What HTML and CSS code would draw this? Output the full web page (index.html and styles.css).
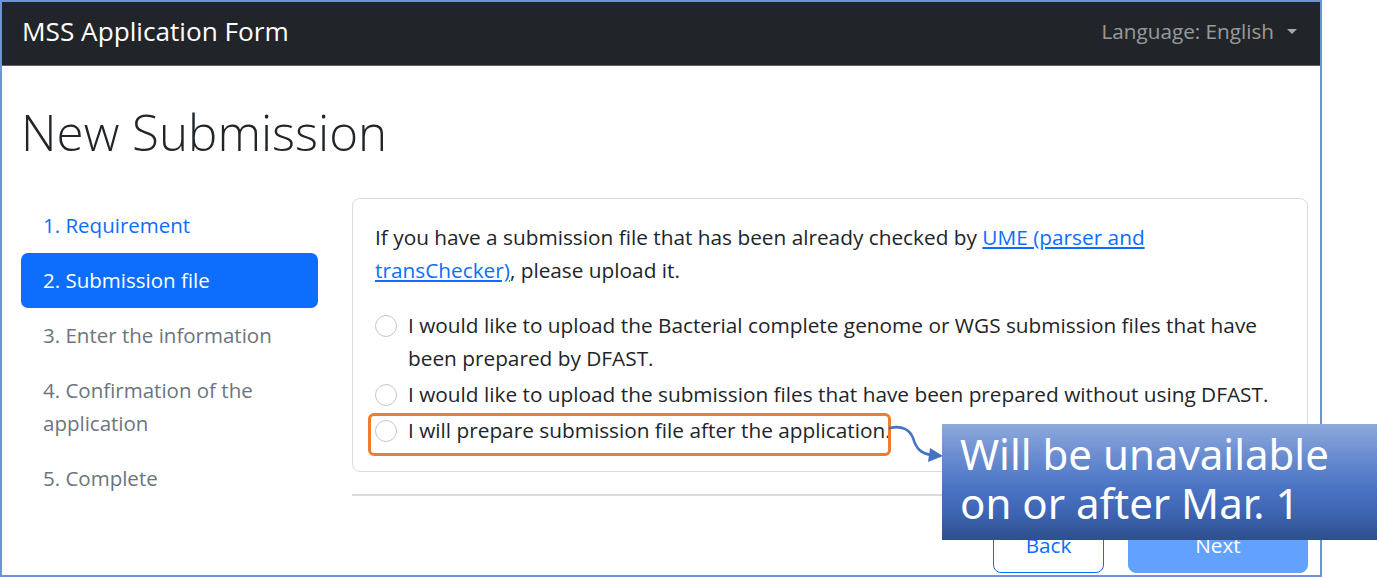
FILE: index.html
```html
<!DOCTYPE html>
<html lang="en">
<head>
<meta charset="utf-8">
<title>MSS Application Form</title>
<link rel="stylesheet" href="styles.css">
</head>
<body>
<div class="frame">
  <nav class="navbar">
    <span class="brand">MSS Application Form</span>
    <span class="lang">Language: English<span class="caret"></span></span>
  </nav>
  <main class="main">
    <h1 class="page-title">New Submission</h1>
    <div class="layout">
      <ul class="steps">
        <li class="step step-link">1. Requirement</li>
        <li class="step step-active">2. Submission file</li>
        <li class="step step-disabled">3. Enter the information</li>
        <li class="step step-disabled">4. Confirmation of the application</li>
        <li class="step step-disabled">5. Complete</li>
      </ul>
      <section class="content">
        <div class="card">
          <p class="intro">If you have a submission file that has been already checked by <a href="#" class="link">UME (parser and transChecker)</a>, please upload it.</p>
          <label class="check"><input type="radio" name="opt" class="radio"><span>I would like to upload the Bacterial complete genome or WGS submission files that have been prepared by DFAST.</span></label>
          <label class="check"><input type="radio" name="opt" class="radio"><span>I would like to upload the submission files that have been prepared without using DFAST.</span></label>
          <label class="check check-last"><input type="radio" name="opt" class="radio"><span>I will prepare submission file after the application.</span></label>
        </div>
        <hr class="divider">
        <div class="actions">
          <button class="btn btn-back" type="button">Back</button>
          <button class="btn btn-next" type="button" disabled>Next</button>
        </div>
      </section>
    </div>
  </main>
</div>
<div class="highlight"></div>
<svg class="arrow" width="60" height="40" viewBox="886 424 60 40" xmlns="http://www.w3.org/2000/svg">
  <path d="M890 428 C902 425 910 430 913 438 C916 448 920 453 931 455" fill="none" stroke="#4472c4" stroke-width="2.6" stroke-linecap="round"/>
  <polygon points="943,456 930,448 928,462" fill="#4472c4"/>
</svg>
<div class="callout">Will be unavailable<br>on or after Mar. 1</div>
</body>
</html>
```
FILE: styles.css
```css
* { box-sizing: border-box; }
body {
  margin: 0;
  position: relative;
  width: 1377px;
  height: 578px;
  overflow: hidden;
  background: #fff;
  font-family: "Open Sans", "Noto Sans", sans-serif;
  color: #212529;
}
.frame {
  width: 1322px;
  height: 577px;
  border: 2px solid #6f93d8;
  overflow: hidden;
  background: #fff;
}
.navbar {
  height: 64px;
  background: #212529;
  border-bottom: 1px solid #5b5d60;
  display: flex;
  align-items: center;
  justify-content: space-between;
  padding: 0 23px 5px 20px;
}
.brand {
  color: #fff;
  font-size: 26.2px;
  line-height: 33px;
}
.lang {
  color: rgba(255, 255, 255, 0.55);
  font-size: 20.7px;
  line-height: 33px;
  display: flex;
  align-items: center;
}
.caret {
  display: inline-block;
  margin-left: 13px;
  width: 0;
  height: 0;
  border-top: 5px solid rgba(255, 255, 255, 0.6);
  border-left: 5px solid transparent;
  border-right: 5px solid transparent;
}
.main {
  padding: 0 12px 0 19px;
}
.page-title {
  margin: 33px 0 33px;
  font-size: 49.3px;
  font-weight: 300;
  line-height: 66px;
  color: #212529;
}
.layout {
  display: grid;
  grid-template-columns: 297px 956px;
  gap: 34px;
}
.steps {
  list-style: none;
  margin: 0;
  padding: 0;
}
.step {
  padding: 11px 22px;
  font-size: 20.5px;
  line-height: 33px;
  border-radius: 7px;
}
.step-link { color: #0d6efd; }
.step-active { background: #0d6efd; color: #fff; }
.step-disabled { color: #6c757d; }
.card {
  border: 1px solid #dadcdf;
  border-radius: 8px;
  padding: 22px 22px 24px;
  font-size: 20.8px;
  line-height: 33px;
}
.intro { margin: 0 0 22px; padding-right: 24px; }
.link { color: #0d6efd; text-decoration: underline; }
.check {
  display: flex;
  align-items: flex-start;
  gap: 11px;
  margin-bottom: 3px;
}
.check-last { margin-bottom: 0; }
.radio {
  appearance: none;
  -webkit-appearance: none;
  flex: none;
  width: 22px;
  height: 22px;
  margin: 6px 0 0;
  border: 1px solid #c5c7ca;
  border-radius: 50%;
  background: #fff;
}
.divider {
  margin: 22px 0;
  border: 0;
  border-top: 2px solid #d9dadb;
}
.actions {
  display: flex;
  justify-content: flex-end;
  gap: 24px;
}
.btn {
  height: 55px;
  font-family: inherit;
  font-size: 20.7px;
  line-height: 33px;
  border-radius: 8px;
  padding: 10px 22px;
}
.btn-back {
  width: 111px;
  background: #fff;
  color: #0d6efd;
  border: 1px solid #0d6efd;
}
.btn-next {
  width: 180px;
  background: #62a1fe;
  color: #fff;
  border: 1px solid #62a1fe;
}
.highlight {
  position: absolute;
  left: 368px;
  top: 413px;
  width: 523px;
  height: 43px;
  border: 3px solid #ed7d31;
  border-radius: 6px;
}
.arrow {
  position: absolute;
  left: 886px;
  top: 424px;
}
.callout {
  position: absolute;
  left: 942px;
  top: 424px;
  width: 435px;
  height: 116px;
  padding: 5px 0 0 18px;
  background: linear-gradient(to bottom, #8eaadc 0%, #6d8fd2 25%, #4a74c4 55%, #3e66b4 75%, #2e4f8c 100%);
  color: #fff;
  font-family: "Noto Sans", "Open Sans", sans-serif;
  font-size: 42px;
  line-height: 49px;
}
```
